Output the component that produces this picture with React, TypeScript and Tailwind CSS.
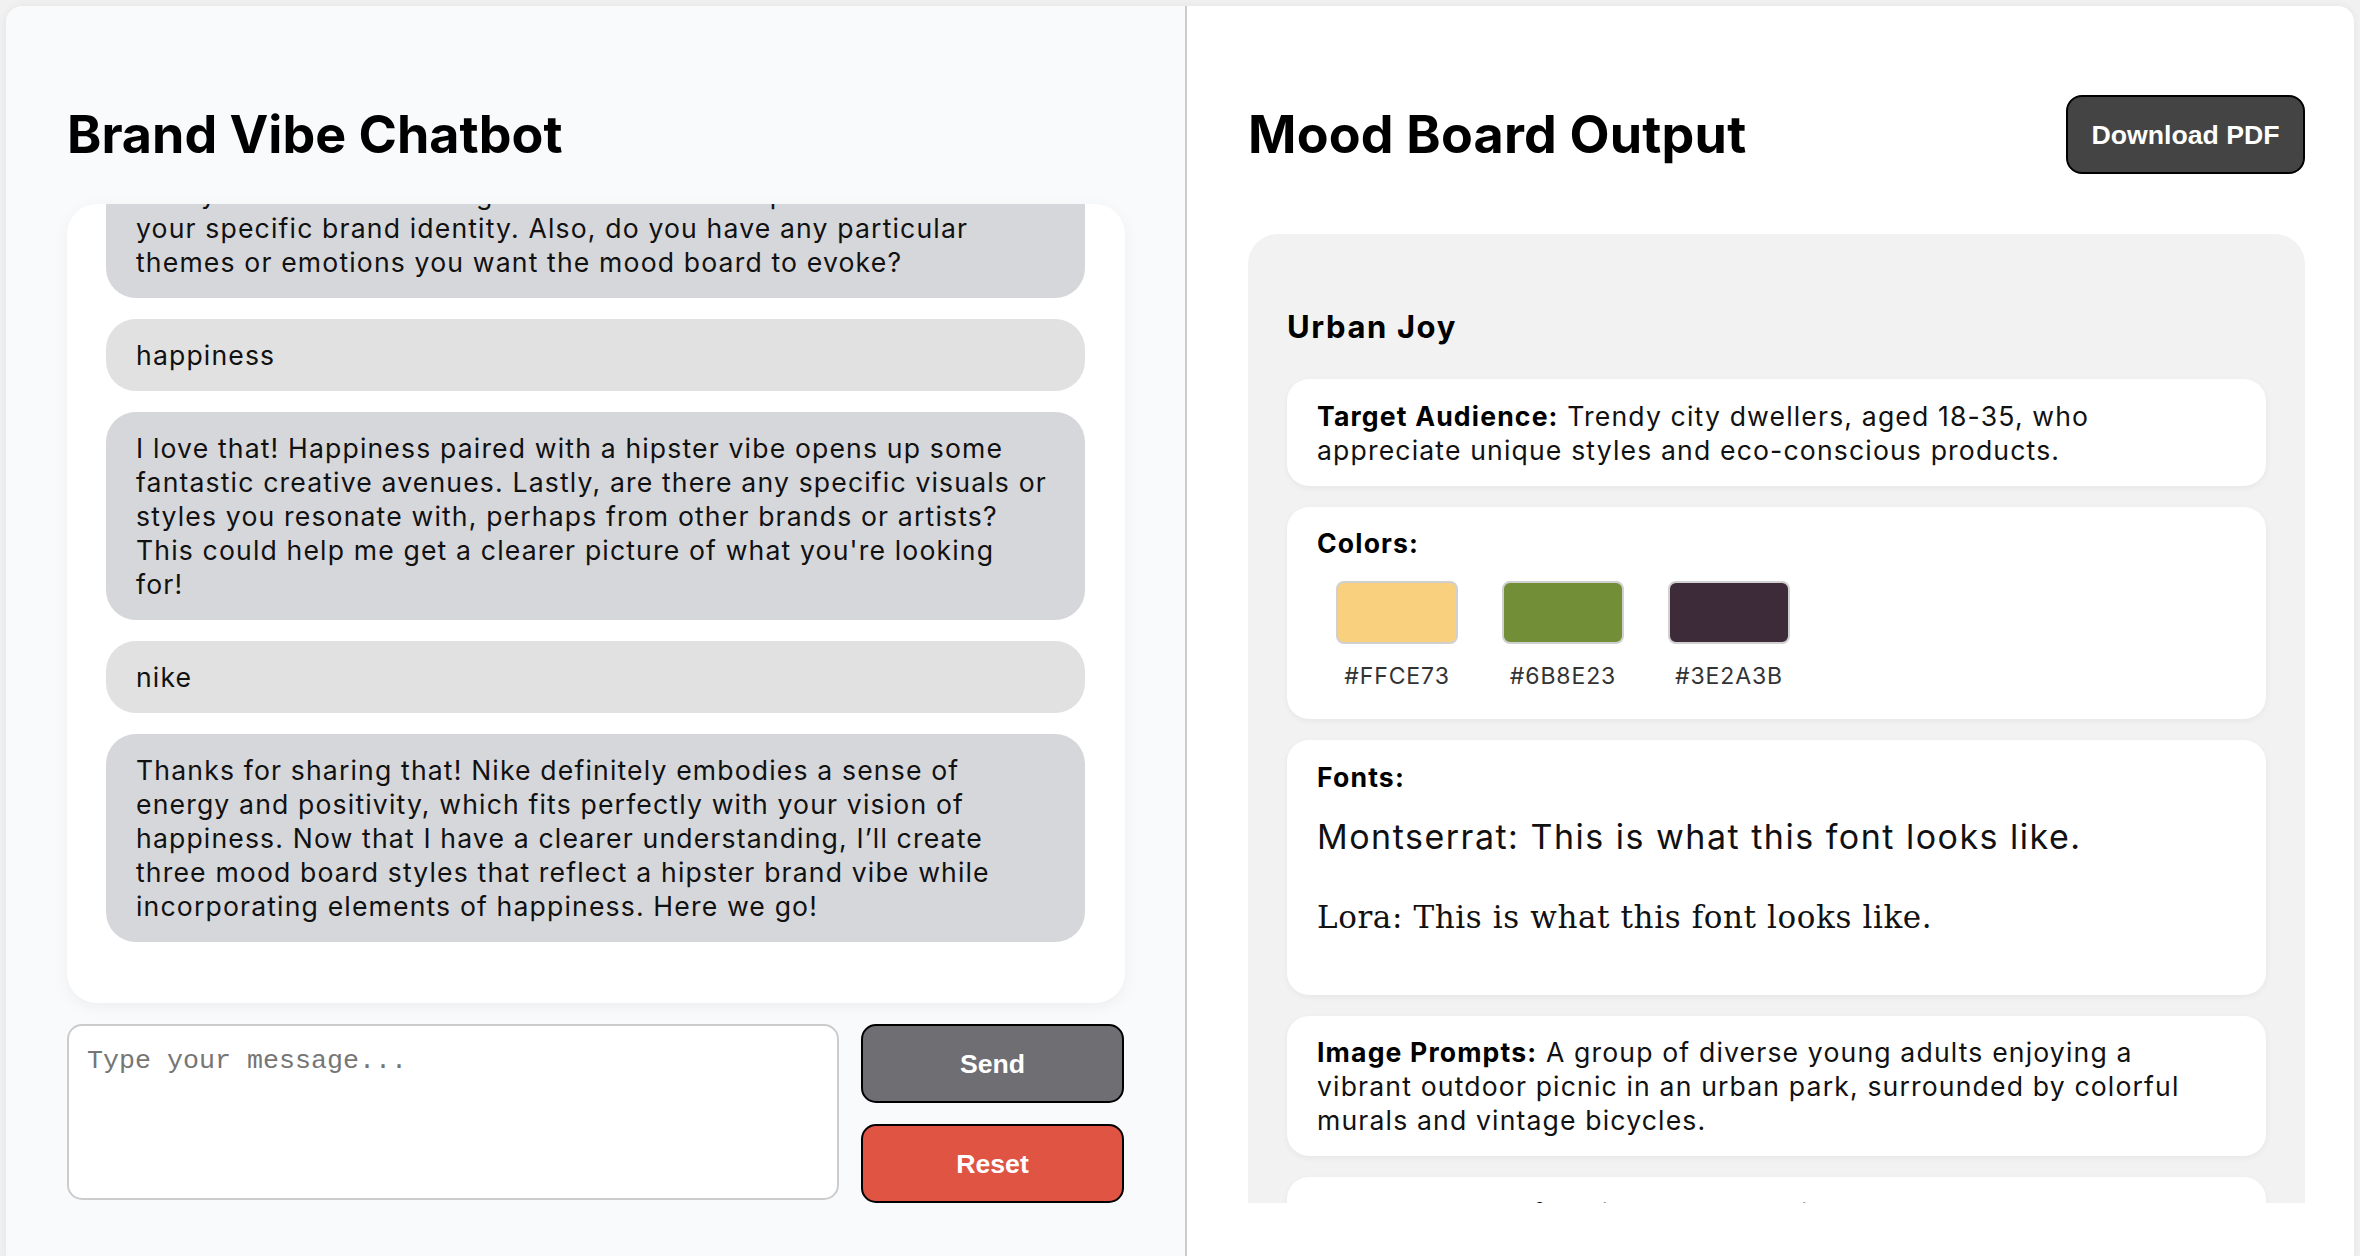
import React from "react";

const sans = "font-['Inter','Liberation_Sans',sans-serif]";
const body = "text-[26.6px] leading-[34px] tracking-[1.15px]";

function Bubble({ lines, user }: { lines: string[]; user?: boolean }) {
  return (
    <div
      className={`shrink-0 rounded-[30px] px-[30px] py-[19px] ${body} text-[#111] ${
        user ? "bg-[#e1e1e1]" : "bg-[#d6d7db]"
      }`}
    >
      {lines.map((l, i) => (
        <span key={i} className="block whitespace-nowrap">
          {l}
        </span>
      ))}
    </div>
  );
}

function Card({ children, className = "" }: { children: React.ReactNode; className?: string }) {
  return (
    <div
      className={`shrink-0 overflow-hidden rounded-[22px] bg-white px-[30px] shadow-[0_2px_6px_rgba(0,0,0,0.05)] ${className}`}
    >
      {children}
    </div>
  );
}

const swatches = [
  { hex: "#FFCE73", bg: "bg-[#f8d07e]" },
  { hex: "#6B8E23", bg: "bg-[#728e37]" },
  { hex: "#3E2A3B", bg: "bg-[#3d2b3a]" },
];

export default function App() {
  return (
    <div className={`h-[1256px] w-full overflow-hidden bg-[#f1f1f1] pl-[6px] pt-[6px] ${sans}`}>
      <div className="flex h-[1262px] w-[2348px] overflow-hidden rounded-[16px] shadow-[0_0_8px_rgba(0,0,0,0.06)]">
        {/* Left panel */}
        <div className="flex w-[1179px] shrink-0 flex-col bg-[#f9fafb] pl-[61px] pr-[60px] pt-[89px]">
          <div className="flex h-[79px] items-center">
            <h1 className="text-[52px] font-bold leading-none tracking-[0px] text-black">Brand Vibe Chatbot</h1>
          </div>
          <div className="mt-[30px] flex h-[799px] flex-col justify-end gap-[21px] overflow-hidden rounded-[30px] bg-white pb-[61px] pl-[39px] pr-[40px] shadow-[0_4px_16px_rgba(0,0,0,0.05)]">
            <Bubble
              lines={[
                "how you'd like these things to be tailored to represent",
                "your specific brand identity. Also, do you have any particular",
                "themes or emotions you want the mood board to evoke?",
              ]}
            />
            <Bubble user lines={["happiness"]} />
            <Bubble
              lines={[
                "I love that! Happiness paired with a hipster vibe opens up some",
                "fantastic creative avenues. Lastly, are there any specific visuals or",
                "styles you resonate with, perhaps from other brands or artists?",
                "This could help me get a clearer picture of what you're looking",
                "for!",
              ]}
            />
            <Bubble user lines={["nike"]} />
            <Bubble
              lines={[
                "Thanks for sharing that! Nike definitely embodies a sense of",
                "energy and positivity, which fits perfectly with your vision of",
                "happiness. Now that I have a clearer understanding, I\u2019ll create",
                "three mood board styles that reflect a hipster brand vibe while",
                "incorporating elements of happiness. Here we go!",
              ]}
            />
          </div>
          <div className="mt-[21px] flex items-start gap-[22px]">
            <textarea
              placeholder="Type your message..."
              className="h-[176px] w-[772px] resize-none rounded-[15px] border-2 border-[#cccccc] bg-white px-[18px] pt-[20px] font-['Liberation_Mono',monospace] text-[26.67px] leading-[30px] text-black outline-none placeholder:text-[#767676]"
            />
            <div className="flex flex-col gap-[21px]">
              <button className="h-[79px] w-[263px] rounded-[15px] border-2 border-black bg-[#6e6e73] font-['Liberation_Sans',Arial,sans-serif] text-[26.67px] font-bold text-white">
                Send
              </button>
              <button className="h-[79px] w-[263px] rounded-[15px] border-2 border-black bg-[#e05444] font-['Liberation_Sans',Arial,sans-serif] text-[26.67px] font-bold text-white">
                Reset
              </button>
            </div>
          </div>
        </div>

        {/* Divider */}
        <div className="w-[2px] shrink-0 bg-[#cccccc]" />

        {/* Right panel */}
        <div className="flex w-[1167px] shrink-0 flex-col bg-white pl-[61px] pr-[49px] pt-[89px]">
          <div className="flex h-[79px] items-center justify-between">
            <h1 className="text-[52px] font-bold leading-none tracking-[0.2px] text-black">Mood Board Output</h1>
            <button className="h-[79px] w-[239px] rounded-[16px] border-2 border-black bg-[#444444] font-['Liberation_Sans',Arial,sans-serif] text-[26.67px] font-bold text-white">
              Download PDF
            </button>
          </div>
          <div className="mt-[60px] flex h-[969px] flex-col overflow-hidden rounded-t-[30px] bg-[#f2f2f2] px-[39px] pt-[76px]">
            <h2 className="h-[34px] text-[31px] font-bold leading-[34px] tracking-[1.6px] text-black">Urban Joy</h2>
            <div className="mt-[35px] flex flex-col gap-[21px]">
              <Card className={`pb-[19px] pt-[20px] ${body} text-[#111]`}>
                <span className="block whitespace-nowrap">
                  <b className="font-bold text-black">Target Audience:</b> Trendy city dwellers, aged 18-35, who
                </span>
                <span className="block whitespace-nowrap">appreciate unique styles and eco-conscious products.</span>
              </Card>
              <Card className="h-[212px] pt-[19px]">
                <div className={`${body} font-bold text-black`}>Colors:</div>
                <div className="mt-[21px] flex gap-[44px] pl-[19px]">
                  {swatches.map((s) => (
                    <div key={s.hex} className="flex w-[122px] flex-col items-center">
                      <div className={`h-[63px] w-[122px] rounded-[8px] border-2 border-[#d0d0d0] ${s.bg}`} />
                      <div className="mt-[16px] whitespace-nowrap text-[23px] leading-[32px] tracking-[0.9px] text-[#333]">
                        {s.hex}
                      </div>
                    </div>
                  ))}
                </div>
              </Card>
              <Card className="h-[255px] pt-[20px]">
                <div className={`${body} font-bold text-black`}>Fonts:</div>
                <p className="mt-[22px] whitespace-nowrap text-[34px] leading-[42px] tracking-[1.5px] text-[#111]">
                  Montserrat: This is what this font looks like.
                </p>
                <p className="mt-[38px] whitespace-nowrap font-['DejaVu_Serif',serif] text-[31px] leading-[42px] tracking-[0.6px] text-[#111]">
                  Lora: This is what this font looks like.
                </p>
              </Card>
              <Card className={`pb-[19px] pt-[19px] ${body} text-[#111]`}>
                <span className="block whitespace-nowrap">
                  <b className="font-bold text-black">Image Prompts:</b> A group of diverse young adults enjoying a
                </span>
                <span className="block whitespace-nowrap">
                  vibrant outdoor picnic in an urban park, surrounded by colorful
                </span>
                <span className="block whitespace-nowrap">murals and vintage bicycles.</span>
              </Card>
              <Card className={`pb-[19px] pt-[19px] ${body} text-[#111]`}>
                <span className="block whitespace-nowrap">
                  <b className="font-bold text-black">Keywords:</b> Playful, vibrant, authentic
                </span>
              </Card>
            </div>
          </div>
        </div>
      </div>
    </div>
  );
}
